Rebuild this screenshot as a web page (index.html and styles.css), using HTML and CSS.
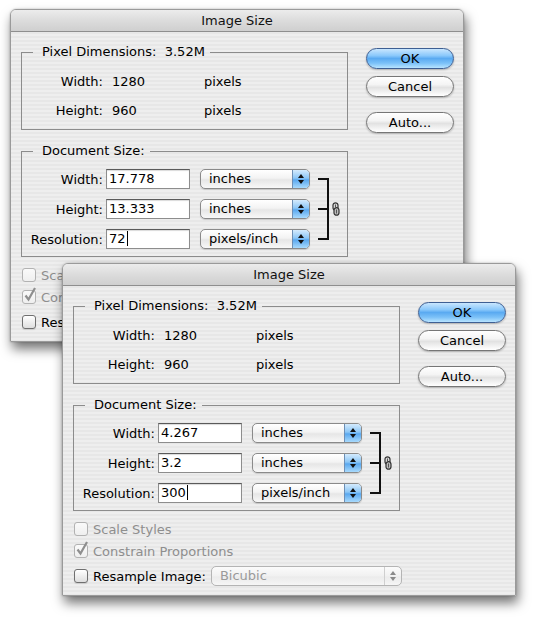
FILE: index.html
```html
<!DOCTYPE html>
<html>
<head>
<meta charset="utf-8">
<link rel="stylesheet" href="styles.css">
</head>
<body>
<div class="win win-a">
  <div class="titlebar">Image Size</div>
  <div class="content">
    <div class="main">
      <fieldset class="group pixel">
        <legend>Pixel Dimensions:&nbsp; 3.52M</legend>
        <div class="px-grid">
          <span class="lbl">Width:</span><span class="val">1280</span><span>pixels</span>
          <span class="lbl">Height:</span><span class="val">960</span><span>pixels</span>
        </div>
      </fieldset>
      <fieldset class="group doc">
        <legend>Document Size:</legend>
        <div class="doc-body">
          <div class="doc-grid">
            <span class="lbl">Width:</span><div class="field">17.778</div>
            <div class="popup"><span class="ptext">inches</span><span class="arrows"><i class="up"></i><i class="down"></i></span></div>
            <span class="lbl">Height:</span><div class="field">13.333</div>
            <div class="popup"><span class="ptext">inches</span><span class="arrows"><i class="up"></i><i class="down"></i></span></div>
            <span class="lbl">Resolution:</span><div class="field">72<span class="caret"></span></div>
            <div class="popup"><span class="ptext">pixels/inch</span><span class="arrows"><i class="up"></i><i class="down"></i></span></div>
          </div>
          <div class="bracket"></div>
          <svg class="chain" width="8" height="14" viewBox="0 0 8 14"><rect x="1" y="0.8" width="5" height="7.5" rx="2.5" fill="#d6d6d6" stroke="#333" stroke-width="1.2"/><rect x="2" y="5.7" width="5" height="7.5" rx="2.5" fill="#bdbdbd" stroke="#333" stroke-width="1.2"/><line x1="3.5" y1="2.5" x2="3.5" y2="7" stroke="#555" stroke-width="1"/><line x1="4.5" y1="7.5" x2="4.5" y2="11.5" stroke="#555" stroke-width="1"/></svg>
        </div>
      </fieldset>
      <div class="checks">
        <div class="check dis"><span class="box"></span><span>Scale Styles</span></div>
        <div class="check dis"><span class="box"><svg class="tick" width="14" height="15" viewBox="0 0 14 15"><path d="M2.5 8.5 L5.5 12.5 L12 1" fill="none" stroke="#8f8f8f" stroke-width="2.2"/></svg></span><span>Constrain Proportions</span></div>
        <div class="check res"><span class="box"></span><span>Resample Image:</span>
          <div class="popup wide off"><span class="ptext">Bicubic</span><span class="arrows"><i class="up"></i><i class="down"></i></span></div>
        </div>
      </div>
    </div>
    <div class="buttons">
      <div class="btn ok">OK</div>
      <div class="btn">Cancel</div>
      <div class="btn auto">Auto...</div>
    </div>
  </div>
</div>

<div class="win win-b">
  <div class="titlebar">Image Size</div>
  <div class="content">
    <div class="main">
      <fieldset class="group pixel">
        <legend>Pixel Dimensions:&nbsp; 3.52M</legend>
        <div class="px-grid">
          <span class="lbl">Width:</span><span class="val">1280</span><span>pixels</span>
          <span class="lbl">Height:</span><span class="val">960</span><span>pixels</span>
        </div>
      </fieldset>
      <fieldset class="group doc">
        <legend>Document Size:</legend>
        <div class="doc-body">
          <div class="doc-grid">
            <span class="lbl">Width:</span><div class="field">4.267</div>
            <div class="popup"><span class="ptext">inches</span><span class="arrows"><i class="up"></i><i class="down"></i></span></div>
            <span class="lbl">Height:</span><div class="field">3.2</div>
            <div class="popup"><span class="ptext">inches</span><span class="arrows"><i class="up"></i><i class="down"></i></span></div>
            <span class="lbl">Resolution:</span><div class="field">300<span class="caret"></span></div>
            <div class="popup"><span class="ptext">pixels/inch</span><span class="arrows"><i class="up"></i><i class="down"></i></span></div>
          </div>
          <div class="bracket"></div>
          <svg class="chain" width="8" height="14" viewBox="0 0 8 14"><rect x="1" y="0.8" width="5" height="7.5" rx="2.5" fill="#d6d6d6" stroke="#333" stroke-width="1.2"/><rect x="2" y="5.7" width="5" height="7.5" rx="2.5" fill="#bdbdbd" stroke="#333" stroke-width="1.2"/><line x1="3.5" y1="2.5" x2="3.5" y2="7" stroke="#555" stroke-width="1"/><line x1="4.5" y1="7.5" x2="4.5" y2="11.5" stroke="#555" stroke-width="1"/></svg>
        </div>
      </fieldset>
      <div class="checks">
        <div class="check dis"><span class="box"></span><span>Scale Styles</span></div>
        <div class="check dis"><span class="box"><svg class="tick" width="14" height="15" viewBox="0 0 14 15"><path d="M2.5 8.5 L5.5 12.5 L12 1" fill="none" stroke="#8f8f8f" stroke-width="2.2"/></svg></span><span>Constrain Proportions</span></div>
        <div class="check res"><span class="box"></span><span>Resample Image:</span>
          <div class="popup wide off"><span class="ptext">Bicubic</span><span class="arrows"><i class="up"></i><i class="down"></i></span></div>
        </div>
      </div>
    </div>
    <div class="buttons">
      <div class="btn ok">OK</div>
      <div class="btn">Cancel</div>
      <div class="btn auto">Auto...</div>
    </div>
  </div>
</div>
</body>
</html>
```
FILE: styles.css
```css
* { box-sizing: border-box; }
html, body { margin: 0; padding: 0; background: #fff; }
body {
  width: 538px; height: 623px; position: relative; overflow: hidden;
  font-family: "DejaVu Sans", "Liberation Sans", sans-serif;
  font-size: 13px; color: #000;
}
.win {
  position: absolute;
  width: 454px; height: 333px;
  border: 1px solid #9a9a9a;
  border-radius: 6px 6px 0 0;
  background: repeating-linear-gradient(to bottom, #eeeeee 0 2px, #e7e7e7 2px 4px);
  box-shadow: 2px 7px 12px rgba(0,0,0,0.55), 0 0 2px rgba(0,0,0,0.25);
}
.win-a { left: 10px; top: 9px; }
.win-b { left: 62px; top: 263px; }
.titlebar {
  height: 22px;
  border-bottom: 1px solid #8e8e8e;
  border-radius: 5px 5px 0 0;
  background: linear-gradient(to bottom, #ececec, #dcdcdc 50%, #cfcfcf);
  text-align: center;
  line-height: 22px;
  font-size: 13px;
  color: #111;
}
.content { display: flex; }
.main { width: 337px; flex-shrink: 0; }
.group {
  margin: 12px 0 0 10px;
  padding: 0;
  width: 327px;
  border: 1px solid #8c8c8c;
  min-width: 0;
}
.group legend {
  margin-left: 11px;
  padding: 0 5px 0 9px;
  line-height: 16px;
}
.px-grid {
  display: grid;
  grid-template-columns: 81px 101px 1fr;
  grid-auto-rows: 29px;
  align-items: center;
  padding: 7px 0 4px;
}
.lbl { text-align: right; white-space: nowrap; }
.val { padding-left: 9px; }
.doc { margin-top: 13px; }
.doc-body { display: flex; align-items: flex-start; padding: 5px 0 2px; }
.doc-grid {
  display: grid;
  grid-template-columns: 81px 87px 120px;
  grid-auto-rows: 30px;
  align-items: center;
}
.doc-grid .field { margin-left: 3px; }
.doc-grid .popup { margin-left: 10px; }
.field {
  height: 20px; width: 84px;
  background: #fff;
  border: 1px solid #8d8d8d;
  border-top-color: #5a5a5a;
  box-shadow: inset 0 1px 1px rgba(0,0,0,0.15);
  padding-left: 2px;
  line-height: 18px;
}
.caret { display: inline-block; width: 1px; height: 15px; background: #000; vertical-align: -3px; margin-left: 1px; }
.popup {
  height: 20px; width: 110px;
  display: flex; align-items: stretch;
  border: 1px solid #8a8a8a;
  border-radius: 5px;
  background: linear-gradient(to bottom, #ffffff, #f3f3f3 45%, #e6e6e6 55%, #f8f8f8);
  box-shadow: 0 1px 1px rgba(0,0,0,0.15);
  overflow: hidden;
  flex-shrink: 0;
}
.ptext { flex: 1; padding-left: 8px; line-height: 18px; white-space: nowrap; }
.arrows {
  width: 17px;
  display: flex; flex-direction: column; align-items: center; justify-content: center; gap: 2px;
  background: linear-gradient(to bottom, #d4ebfd, #8cc6f6 45%, #5aa8ef 55%, #a8dafd);
  border-left: 1px solid #6d8fb5;
}
.arrows i { display: block; width: 0; height: 0; border-left: 3px solid transparent; border-right: 3px solid transparent; }
.arrows .up { border-bottom: 4px solid #111; }
.arrows .down { border-top: 4px solid #111; }
.popup.off { background: linear-gradient(to bottom, #fbfbfb, #f1f1f1 50%, #ebebeb 55%, #f6f6f6); border-color: #b4b4b4; color: #9a9a9a; box-shadow: none; }
.popup.off .arrows { background: none; border-left: 1px solid #cfcfcf; }
.popup.off .up { border-bottom-color: #8a8a8a; }
.popup.off .down { border-top-color: #8a8a8a; }
.popup.wide { width: 191px; margin-left: 5px; }
.bracket {
  position: relative;
  width: 11px; height: 62px;
  margin: 14px 0 0 8px;
  border: 2px solid #111;
  border-left: none;
  flex-shrink: 0;
}
.bracket::after {
  content: ""; position: absolute; left: 0; right: 0; top: 28px; height: 2px; background: #111;
}
.chain { margin: 38px 0 0 3px; flex-shrink: 0; }
.checks { padding-top: 7px; }
.check { display: flex; align-items: center; height: 22px; padding-left: 11px; white-space: nowrap; }
.check.res { height: 28px; }
.check > span { flex-shrink: 0; }
.check .box {
  position: relative;
  width: 14px; height: 14px;
  margin-right: 5px;
  border: 1px solid #6f6f6f;
  border-radius: 3px;
  background: linear-gradient(to bottom, #ffffff, #eeeeee 50%, #dedede);
  box-shadow: 0 1px 1px rgba(0,0,0,0.12);
}
.check.dis { color: #8e8e8e; }
.check.dis .box { border-color: #b2b2b2; background: linear-gradient(to bottom, #fafafa, #efefef); box-shadow: none; }
.tick { position: absolute; left: 0; top: -4px; }
.buttons { display: flex; flex-direction: column; width: 88px; margin-left: 18px; padding-top: 16px; flex-shrink: 0; }
.btn {
  height: 21px;
  border: 1px solid #767676;
  border-radius: 11px;
  background: linear-gradient(to bottom, #ffffff, #f4f4f4 40%, #e2e2e2 55%, #f6f6f6 85%, #ffffff);
  box-shadow: 0 1px 2px rgba(0,0,0,0.25);
  text-align: center;
  line-height: 19px;
  margin-bottom: 7px;
}
.btn.ok {
  border-color: #3e5f93;
  background: linear-gradient(to bottom, #c9e6fe, #8ac8fb 35%, #5aaaf1 50%, #7cc1f8 75%, #b8e4ff);
}
.btn.auto { margin-top: 8px; }
```
